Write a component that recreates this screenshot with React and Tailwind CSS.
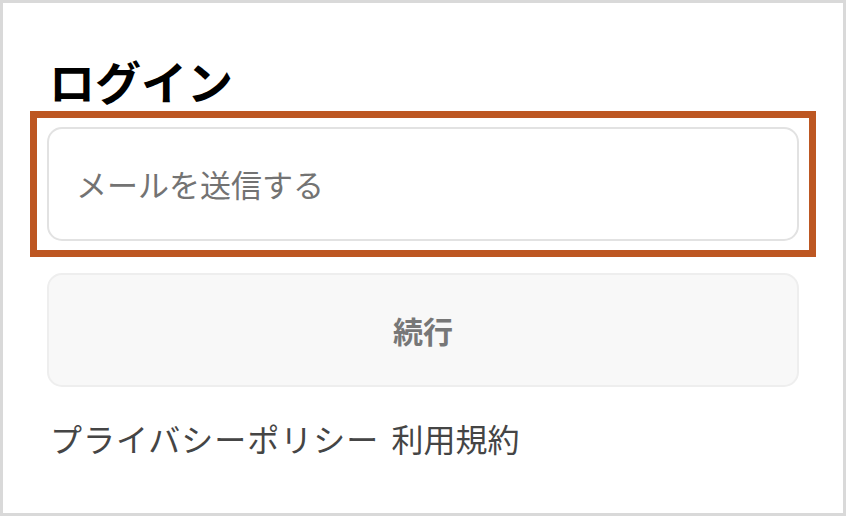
export default function App() {
  const font = { fontFamily: '"Noto Sans CJK JP", "Noto Sans", sans-serif' };
  return (
    <div
      className="w-[846px] h-[516px] border-[3px] border-[#d9d9d9] bg-white overflow-hidden"
      style={font}
    >
      <div className="px-[27px] pt-[46px] flex flex-col">
        <h1 className="pl-[19px] text-[46px] leading-[62px] font-bold text-black h-[62px]">
          ログイン
        </h1>
        <div className="border-[7px] border-[#bd5722] px-[10px] py-[9px]">
          <div className="h-[114px] rounded-[15px] border-2 border-[#e2e2e2] bg-white flex items-center pl-[27px] text-[31px] text-[#737373]">
            メールを送信する
          </div>
        </div>
        <div className="mx-[17px] mt-[16px] h-[114px] rounded-[15px] border-2 border-[#eeeeee] bg-[#f8f8f8] flex items-center justify-center text-[30px] font-bold text-[#777777]">
          続行
        </div>
        <div className="pl-[20px] mt-[31px] flex items-center gap-[12px] text-[32px] leading-[40px] text-[#454545]">
          <span className="tracking-[1px]">プライバシーポリシー</span>
          <span>利用規約</span>
        </div>
      </div>
    </div>
  );
}
